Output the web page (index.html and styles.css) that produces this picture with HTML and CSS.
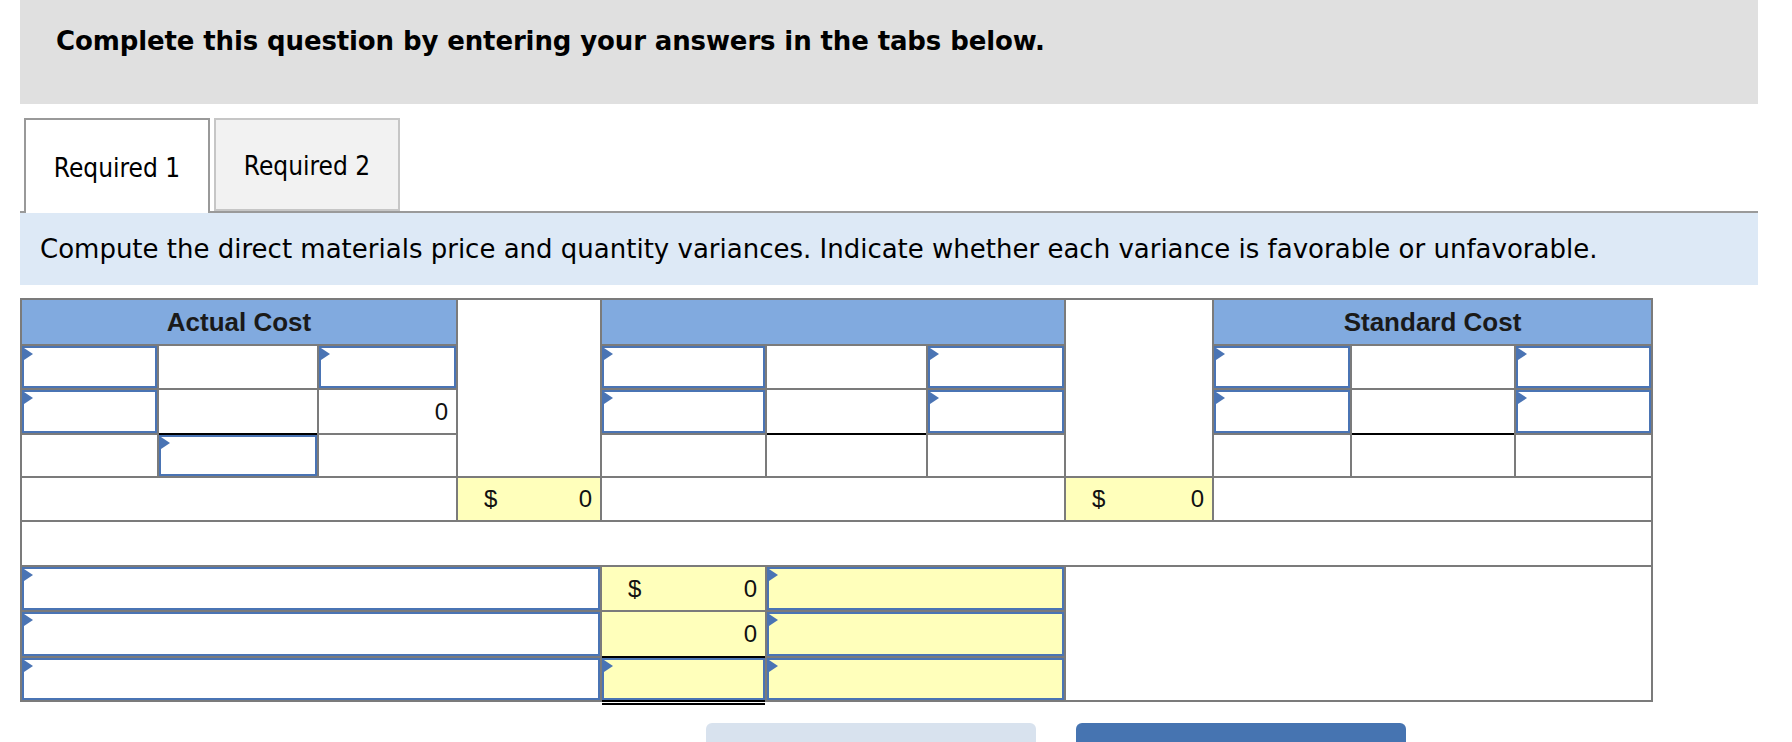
FILE: index.html
```html
<!DOCTYPE html>
<html lang="en">
<head>
<meta charset="utf-8">
<title>Direct materials variances</title>
<link rel="stylesheet" href="styles.css">
</head>
<body>
<div class="page">
  <div class="banner">Complete this question by entering your answers in the tabs below.</div>

  <div class="tabs">
    <div class="tab active">Required 1</div>
    <div class="tab inactive">Required 2</div>
  </div>

  <div class="band">Compute the direct materials price and quantity variances. Indicate whether each variance is favorable or unfavorable.</div>

  <div class="grid">
    <!-- row 1: headers -->
    <div class="c head s3">Actual Cost</div>
    <div class="c r4"></div>
    <div class="c head s3"></div>
    <div class="c r4"></div>
    <div class="c head s3">Standard Cost</div>

    <!-- row 2 -->
    <div class="c inp"></div>
    <div class="c"></div>
    <div class="c inp"></div>
    <div class="c inp"></div>
    <div class="c"></div>
    <div class="c inp"></div>
    <div class="c inp"></div>
    <div class="c"></div>
    <div class="c inp"></div>

    <!-- row 3 -->
    <div class="c inp"></div>
    <div class="c under"></div>
    <div class="c num">0</div>
    <div class="c inp"></div>
    <div class="c under"></div>
    <div class="c inp"></div>
    <div class="c inp"></div>
    <div class="c under"></div>
    <div class="c inp"></div>

    <!-- row 4 -->
    <div class="c"></div>
    <div class="c inp"></div>
    <div class="c"></div>
    <div class="c"></div>
    <div class="c"></div>
    <div class="c"></div>
    <div class="c"></div>
    <div class="c"></div>
    <div class="c"></div>

    <!-- row 5: totals -->
    <div class="c s3"></div>
    <div class="c yel money"><span>$</span><span>0</span></div>
    <div class="c s3"></div>
    <div class="c yel money"><span>$</span><span>0</span></div>
    <div class="c s3"></div>

    <!-- row 6: spacer -->
    <div class="c s11"></div>

    <!-- rows 7-9: variances -->
    <div class="c inp s4"></div>
    <div class="c yel money"><span>$</span><span>0</span></div>
    <div class="c yel inp s2"></div>
    <div class="c s4 r3"></div>

    <div class="c inp s4"></div>
    <div class="c yel money under"><span></span><span>0</span></div>
    <div class="c yel inp s2"></div>

    <div class="c inp s4"></div>
    <div class="c yel inp dbl"></div>
    <div class="c yel inp s2"></div>
  </div>

  <div class="nav">
    <div class="btn prev"></div>
    <div class="btn next"></div>
  </div>
</div>
</body>
</html>
```

FILE: styles.css
```css
html, body {
  margin: 0;
  padding: 0;
  background: #ffffff;
}

body {
  font-family: "DejaVu Sans", sans-serif;
  color: #000000;
}

.page {
  width: 1738px;
  margin-left: 20px;
}

.banner {
  box-sizing: border-box;
  height: 104px;
  background: #e0e0e0;
  padding: 26px 0 0 36px;
  font-size: 26px;
  line-height: 30px;
  font-weight: bold;
  letter-spacing: -0.12px;
}

.tabs {
  display: flex;
  align-items: flex-start;
  gap: 4px;
  margin-top: 14px;
  padding-left: 4px;
  height: 93px;
  border-bottom: 2px solid #9a9a9a;
}

.tab {
  box-sizing: border-box;
  width: 186px;
  display: flex;
  align-items: center;
  justify-content: center;
  font-family: "DejaVu Sans Condensed", "DejaVu Sans", sans-serif;
  font-stretch: condensed;
  font-size: 26px;
  padding-top: 2px;
}

.tab.active {
  height: 95px;
  background: #ffffff;
  border: 2px solid #999999;
  border-bottom: none;
}

.tab.inactive {
  height: 93px;
  background: #f2f2f2;
  border: 2px solid #c6c6c6;
}

.band {
  height: 72px;
  background: #dde9f6;
  display: flex;
  align-items: center;
  padding-left: 20px;
  font-size: 26px;
}

.grid {
  display: grid;
  width: max-content;
  margin-top: 13px;
  grid-template-columns: 135px 158px 137px 142px 163px 159px 136px 146px 136px 162px 135px;
  grid-template-rows: 44px 42px 43px 41px 42px 43px 43px 44px 42px;
  gap: 2px;
  padding: 2px;
  background: #7b7b7b;
  font-family: "Liberation Sans", Arial, sans-serif;
  font-size: 24px;
  color: #111111;
}

.c {
  box-sizing: border-box;
  background: #ffffff;
}

.s2 { grid-column: span 2; }
.s3 { grid-column: span 3; }
.s4 { grid-column: span 4; }
.s11 { grid-column: span 11; }
.r3 { grid-row: span 3; }
.r4 { grid-row: span 4; }

.head {
  background: #81aadf;
  display: flex;
  align-items: center;
  justify-content: center;
  font-weight: bold;
  font-size: 26px;
  color: #1a1a1a;
}

.inp {
  position: relative;
  border: 2px solid #4a74b4;
}

.inp::before {
  content: "";
  position: absolute;
  top: 0;
  left: 0;
  width: 0;
  height: 0;
  border-left: 9px solid #4a74b4;
  border-top: 6px solid transparent;
  border-bottom: 6px solid transparent;
}

.num {
  display: flex;
  align-items: center;
  justify-content: flex-end;
  padding-right: 8px;
}

.yel {
  background: #ffffbb;
}

.money {
  display: flex;
  align-items: center;
  justify-content: space-between;
  padding: 0 8px 0 26px;
}

.under {
  box-shadow: 0 2px 0 #000000;
}

.dbl {
  box-shadow: 0 2px 0 #000000, 0 3px 0 #ffffff, 0 5px 0 #000000;
}

.nav {
  display: flex;
  gap: 40px;
  margin-top: 21px;
  padding-left: 686px;
}

.btn {
  width: 330px;
  height: 40px;
  border-radius: 6px 6px 0 0;
}

.btn.prev {
  background: #d8e2ee;
}

.btn.next {
  background: #4674b1;
}
```
